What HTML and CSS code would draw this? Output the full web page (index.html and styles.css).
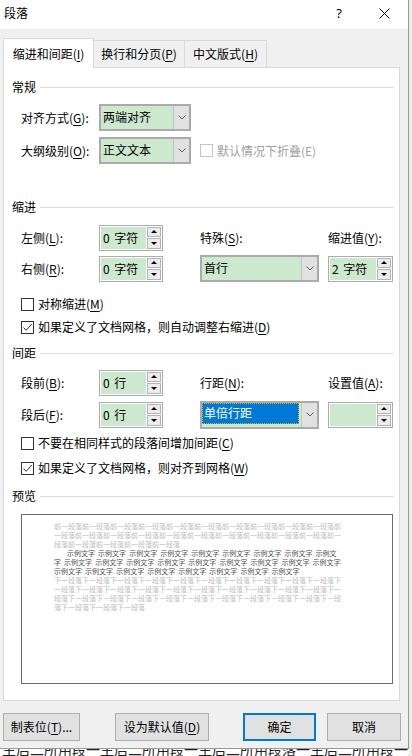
FILE: index.html
```html
<!DOCTYPE html>
<html lang="zh-CN">
<head>
<meta charset="utf-8">
<title>段落</title>
<link rel="stylesheet" href="styles.css">
</head>
<body>
<div class="screen">
  <div class="dialog">
    <div class="titlebar">
      <span class="title">段落</span>
      <span class="help">?</span>
      <svg class="close" width="11" height="11" viewBox="0 0 11 11"><path d="M0.5 0.5 L10.5 10.5 M10.5 0.5 L0.5 10.5" stroke="#000" stroke-width="1" fill="none"/></svg>
    </div>

    <div class="tabs">
      <div class="tab active"><span>缩进和间距(<u>I</u>)</span></div>
      <div class="tab t2"><span>换行和分页(<u>P</u>)</span></div>
      <div class="tab t3"><span>中文版式(<u>H</u>)</span></div>
    </div>

    <div class="panel">
      <div class="section"><span>常规</span><i class="rule"></i></div>
      <div class="grid-general">
        <span class="lbl">对齐方式(<u>G</u>):</span>
        <div class="combo"><span class="combo-val">两端对齐</span><span class="combo-btn"><svg width="8" height="5" viewBox="0 0 8 5"><polyline points="0.5,0.5 4,4 7.5,0.5" fill="none" stroke="#606060" stroke-width="1"/></svg></span></div>
        <span class="lbl c1">大纲级别(<u>O</u>):</span>
        <div class="combo"><span class="combo-val">正文文本</span><span class="combo-btn"><svg width="8" height="5" viewBox="0 0 8 5"><polyline points="0.5,0.5 4,4 7.5,0.5" fill="none" stroke="#606060" stroke-width="1"/></svg></span></div>
        <label class="check disabled c4"><span class="box"></span><span class="ctext">默认情况下折叠(E)</span></label>
      </div>

      <div class="section sec-indent"><span>缩进</span><i class="rule"></i></div>
      <div class="grid-fields">
        <span class="lbl c1">左侧(<u>L</u>):</span>
        <div class="spin c2"><span class="spin-val">0 字符</span><span class="spin-btns"><span class="up"></span><span class="dn"></span></span></div>
        <span class="lbl c4">特殊(<u>S</u>):</span>
        <span class="lbl c6">缩进值(<u>Y</u>):</span>

        <span class="lbl c1">右侧(<u>R</u>):</span>
        <div class="spin c2"><span class="spin-val">0 字符</span><span class="spin-btns"><span class="up"></span><span class="dn"></span></span></div>
        <div class="combo c4"><span class="combo-val">首行</span><span class="combo-btn"><svg width="8" height="5" viewBox="0 0 8 5"><polyline points="0.5,0.5 4,4 7.5,0.5" fill="none" stroke="#606060" stroke-width="1"/></svg></span></div>
        <div class="spin c6"><span class="spin-val">2 字符</span><span class="spin-btns"><span class="up"></span><span class="dn"></span></span></div>
      </div>
      <label class="check chk-a"><span class="box"></span><span class="ctext">对称缩进(<u>M</u>)</span></label>
      <label class="check chk-b"><span class="box"><svg width="11" height="11" viewBox="0 0 11 11"><polyline points="1.5,5.5 4.2,8.3 9.8,2" fill="none" stroke="#333" stroke-width="1"/></svg></span><span class="ctext">如果定义了文档网格，则自动调整右缩进(<u>D</u>)</span></label>

      <div class="section sec-spacing"><span>间距</span><i class="rule"></i></div>
      <div class="grid-fields grid-spacing">
        <span class="lbl c1">段前(<u>B</u>):</span>
        <div class="spin c2"><span class="spin-val">0 行</span><span class="spin-btns"><span class="up"></span><span class="dn"></span></span></div>
        <span class="lbl c4">行距(<u>N</u>):</span>
        <span class="lbl c6">设置值(<u>A</u>):</span>

        <span class="lbl c1">段后(<u>F</u>):</span>
        <div class="spin c2"><span class="spin-val">0 行</span><span class="spin-btns"><span class="up"></span><span class="dn"></span></span></div>
        <div class="combo c4 tall"><span class="combo-val"><span class="sel">单倍行距</span></span><span class="combo-btn"><svg width="8" height="5" viewBox="0 0 8 5"><polyline points="0.5,0.5 4,4 7.5,0.5" fill="none" stroke="#606060" stroke-width="1"/></svg></span></div>
        <div class="spin c6"><span class="spin-val"></span><span class="spin-btns"><span class="up"></span><span class="dn"></span></span></div>
      </div>
      <label class="check chk-c"><span class="box"></span><span class="ctext">不要在相同样式的段落间增加间距(<u>C</u>)</span></label>
      <label class="check chk-d"><span class="box"><svg width="11" height="11" viewBox="0 0 11 11"><polyline points="1.5,5.5 4.2,8.3 9.8,2" fill="none" stroke="#333" stroke-width="1"/></svg></span><span class="ctext">如果定义了文档网格，则对齐到网格(<u>W</u>)</span></label>

      <div class="section sec-preview"><span>预览</span><i class="rule"></i></div>
      <div class="preview">
        <div class="pl faint">前一段落前一段落前一段落前一段落前一段落前一段落前一段落前一段落前一段落前一段落前</div>
        <div class="pl faint">一段落前一段落前一段落前一段落前一段落前一段落前一段落前一段落前一段落前一段落前一</div>
        <div class="pl faint">段落前一段落前一段落前一段落前一段落</div>
        <div class="pl sample first">示例文字 示例文字 示例文字 示例文字 示例文字 示例文字 示例文字 示例文字 示例文</div>
        <div class="pl sample">字 示例文字 示例文字 示例文字 示例文字 示例文字 示例文字 示例文字 示例文字 示例文字</div>
        <div class="pl sample">示例文字 示例文字 示例文字 示例文字 示例文字 示例文字 示例文字 示例文字</div>
        <div class="pl faint">下一段落下一段落下一段落下一段落下一段落下一段落下一段落下一段落下一段落下一段落下</div>
        <div class="pl faint">一段落下一段落下一段落下一段落下一段落下一段落下一段落下一段落下一段落下一段落下一</div>
        <div class="pl faint">段落下一段落下一段落下一段落下一段落下一段落下一段落下一段落下一段落下一段落下一段</div>
        <div class="pl faint">落下一段落下一段落下一段落</div>
      </div>
    </div>

    <div class="buttons">
      <button class="btn b-tabs">制表位(<u>T</u>)...</button>
      <button class="btn b-default">设为默认值(<u>D</u>)</button>
      <button class="btn b-ok">确定</button>
      <button class="btn b-cancel">取消</button>
    </div>
  </div>
  <div class="behind"><span>生后二所用段一生后二所用段一生后二所用段落一生后二所用段一生后二所用段落</span></div>
</div>
</body>
</html>
```
FILE: styles.css
```css
* { box-sizing: border-box; }
html, body { margin: 0; padding: 0; }
body {
  width: 412px;
  height: 756px;
  overflow: hidden;
  background: #ececec;
  font-family: "Noto Sans CJK SC", "Noto Sans", sans-serif;
  font-size: 12px;
  color: #000;
}
u { text-decoration: underline; text-underline-offset: 2px; }

.screen { width: 412px; height: 756px; display: flex; flex-direction: column; }

.dialog {
  width: 409px;
  height: 749px;
  flex: none;
  background: #f0f0f0;
  border-right: 1px solid #9a9a9a;
  border-bottom: 1px solid #9a9a9a;
  display: flex;
  flex-direction: column;
}

/* title bar */
.titlebar {
  height: 29px;
  flex: none;
  background: #fff;
  display: flex;
  align-items: flex-start;
  padding: 5px 18px 0 4px;
}
.title { flex: 1; line-height: 16px; }
.help {
  width: 10px;
  margin-right: 35px;
  text-align: center;
  font-family: "Noto Sans", sans-serif;
  font-size: 13px;
  line-height: 16px;
}
.close { margin-top: 3px; }

/* tabs */
.tabs {
  display: flex;
  align-items: flex-end;
  height: 29px;
  margin: 9px 0 0 3px;
  position: relative;
  z-index: 1;
}
.tab {
  height: 27px;
  border: 1px solid #d9d9d9;
  border-bottom: none;
  border-left: none;
  background: #f0f0f0;
  display: flex;
  align-items: center;
  justify-content: center;
  line-height: 16px;
  white-space: nowrap;
}
.tab.active {
  width: 91px;
  height: 30px;
  margin-bottom: -1px;
  background: #fff;
  border-left: 1px solid #d9d9d9;
}
.tab.t2 { width: 91px; }
.tab.t3 { width: 82px; }

/* panel */
.panel {
  margin-left: 3px;
  width: 397px;
  height: 634px;
  flex: none;
  background: #fff;
  border: 1px solid #d9d9d9;
  padding: 11px 5px 0 17px;
}

.section {
  display: flex;
  align-items: center;
  margin-left: -9px;
  height: 16px;
  line-height: 16px;
}
.section .rule {
  flex: 1;
  height: 1px;
  background: #dcdcdc;
  margin-left: 4px;
}
.sec-indent { margin-top: 35px; }
.sec-spacing { margin-top: 10px; }
.sec-preview { margin-top: 12px; }

.lbl { white-space: nowrap; line-height: 16px; }

.grid-general {
  display: grid;
  grid-template-columns: 78px 92px 9px auto;
  grid-auto-rows: 27px;
  row-gap: 6px;
  margin-top: 9px;
  align-items: center;
}
.grid-fields {
  display: grid;
  grid-template-columns: 78px 64px 37px 119px 9px 65px;
  grid-template-rows: 27px 27px;
  row-gap: 4px;
  margin-top: 9px;
  align-items: center;
}
.grid-spacing { grid-template-rows: 25px 27px; row-gap: 6px; }

.c1 { grid-column: 1; }
.c2 { grid-column: 2; }
.c4 { grid-column: 4; }
.c6 { grid-column: 6; }

/* combo box */
.combo {
  height: 27px;
  display: flex;
  border: 2px solid #ababab;
  background: #cce8cf;
}
.combo.tall { height: 28px; }
.combo-val {
  flex: 1;
  padding-left: 2px;
  line-height: 22px;
  white-space: nowrap;
}
.combo.tall .combo-val { padding: 0; display: flex; align-items: flex-start; }
.sel {
  width: 97px;
  height: 21px;
  background: #0078d7;
  color: #fff;
  outline: 1px dotted #e8b400;
  outline-offset: -1px;
  padding-left: 2px;
  line-height: 20px;
}
.combo-btn {
  width: 16px;
  background: #e1e1e1;
  border-left: 1px solid #c4c4c4;
  display: flex;
  align-items: center;
  justify-content: center;
}

/* spinner */
.spin {
  height: 26px;
  display: flex;
  gap: 1px;
  border: 1px solid #acacac;
  padding: 1px;
  background: #fff;
}
.spin-val {
  flex: 1;
  background: #cce8cf;
  padding-left: 2px;
  line-height: 22px;
  white-space: nowrap;
  word-spacing: 2px;
}
.spin-btns {
  width: 14px;
  display: flex;
  flex-direction: column;
  gap: 1px;
}
.up, .dn {
  flex: 1;
  background: #ececec;
  border: 1px solid #b4b4b4;
  display: flex;
  align-items: center;
  justify-content: center;
}
.up::after {
  content: "";
  border-left: 3px solid transparent;
  border-right: 3px solid transparent;
  border-bottom: 3px solid #000;
}
.dn::after {
  content: "";
  border-left: 3px solid transparent;
  border-right: 3px solid transparent;
  border-top: 3px solid #000;
}

/* checkboxes */
.check {
  display: flex;
  align-items: center;
  gap: 4px;
  height: 16px;
  line-height: 16px;
  white-space: nowrap;
}
.check .box {
  width: 13px;
  height: 13px;
  border: 1px solid #333;
  background: #fff;
  flex: none;
  display: flex;
  align-items: center;
  justify-content: center;
}
.ctext { white-space: nowrap; }
.check.disabled { color: #a0a0a0; }
.check.disabled .box { border-color: #c4c4c4; }
.chk-a { margin-top: 14px; }
.chk-b { margin-top: 7px; }
.chk-c { margin-top: 7px; }
.chk-d { margin-top: 9px; }

/* preview */
.preview {
  margin-top: 10px;
  width: 372px;
  height: 170px;
  border: 1px solid #6b6b6b;
  background: #fff;
  padding: 7px 0 0 32px;
  font-size: 7px;
  line-height: 9px;
}
.pl { white-space: nowrap; height: 9px; }
.faint { color: #bdbdbd; }
.sample { color: #505050; word-spacing: 1.5px; }
.sample.first { padding-left: 13px; }

/* buttons */
.buttons {
  display: flex;
  margin: 12px 0 0 3px;
  height: 28px;
}
.btn {
  height: 28px;
  background: #e1e1e1;
  border: 1px solid #adadad;
  font-family: "Noto Sans CJK SC", "Noto Sans", sans-serif;
  font-size: 12px;
  color: #000;
  padding: 0;
  line-height: 16px;
}
.b-tabs { width: 77px; }
.b-default { width: 94px; margin-left: 35px; }
.b-ok { width: 73px; margin-left: 34px; border: 2px solid #0078d7; }
.b-cancel { width: 74px; margin-left: 11px; }

/* document behind the dialog */
.behind {
  height: 7px;
  width: 409px;
  background: #fff;
  overflow: hidden;
  padding-left: 2px;
}
.behind span {
  display: block;
  margin-top: -9px;
  font-size: 14px;
  line-height: 18px;
  white-space: nowrap;
  color: #222;
}
```
